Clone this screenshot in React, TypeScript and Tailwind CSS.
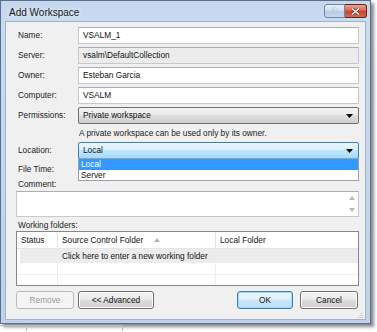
import React from "react";

const F = { fontFamily: '"Liberation Sans", Arial, sans-serif' };

function Arrow({ className = "" }: { className?: string }) {
  return (
    <svg width="7" height="4" viewBox="0 0 7 4" className={className}>
      <path d="M0 0 L7 0 L3.5 4 Z" fill="#000" />
    </svg>
  );
}

function Row({ label, children }: { label: string; children: React.ReactNode }) {
  return (
    <div className="flex items-center h-[17px] shrink-0">
      <div className="w-[60px] text-[8.3px] text-[#222]">{label}</div>
      <div className="flex-1 h-full">{children}</div>
    </div>
  );
}

function TextBox({ value, gray }: { value: string; gray?: boolean }) {
  return (
    <div
      className={`h-full flex items-center px-[4px] border border-[#c5c8d0] border-t-[#abadb3] text-[8.3px] text-[#111] ${
        gray ? "bg-[#ececec]" : "bg-white"
      }`}
    >
      {value}
    </div>
  );
}

function Btn({
  children,
  w,
  variant = "normal",
}: {
  children: React.ReactNode;
  w: string;
  variant?: "normal" | "default" | "disabled";
}) {
  const cls =
    variant === "disabled"
      ? "border-[#b9bcbf] bg-[#f4f4f4] text-[#9a9a9a]"
      : variant === "default"
      ? "border-[#3c7fb1] bg-[linear-gradient(#eaf6fd,#e2f2fb_45%,#c8e6f7_50%,#bfe0f3)] text-[#111] shadow-[inset_0_0_0_1px_#a3d9f7]"
      : "border-[#707070] bg-[linear-gradient(#f2f2f2,#ebebeb_45%,#dddddd_50%,#cfcfcf)] text-[#111] shadow-[inset_0_0_0_1px_#fbfbfb]";
  return (
    <div
      className={`${w} h-[18px] rounded-[3px] border flex items-center justify-center text-[8.3px] ${cls}`}
    >
      {children}
    </div>
  );
}

export default function App() {
  return (
    <div className="w-[377px] h-[332px] bg-white overflow-hidden flex flex-col" style={F}>
      <div className="w-[371px] h-[324px] shrink-0 flex flex-col bg-[linear-gradient(#c4d7ee,#c9dbf0_20px,#bdd2eb)] border border-[#5d6f88] shadow-[3px_3px_3px_rgba(0,0,0,0.45)]">
        {/* title bar */}
        <div className="h-[20px] shrink-0 flex items-start justify-between pl-[8px] pr-[3px]">
          <div className="text-[10px] text-[#1a1a1a] mt-[4px] [text-shadow:0_0_6px_#ffffff]">
            Add Workspace
          </div>
          <div className="flex mt-[3px]">
            <div className="w-[21px] h-[14px] rounded-l-[3px] border border-[#6f86a6] bg-[linear-gradient(#e6eef8,#cddcee_50%,#b8cce6_51%,#c6d8ee)] flex items-center justify-center text-[8px] font-bold text-white [text-shadow:0_0_1px_#4a5d7a]">
              ?
            </div>
            <div className="w-[22px] h-[14px] rounded-r-[3px] border border-l-0 border-[#6a2417] bg-[linear-gradient(#e8a493,#d36a52_45%,#c2432b_50%,#d36b4f)] flex items-center justify-center">
              <svg width="9" height="7" viewBox="0 0 9 7">
                <path d="M1 0.5 L8 6.5 M8 0.5 L1 6.5" stroke="#5a1d12" strokeWidth="2.6" />
                <path d="M1 0.5 L8 6.5 M8 0.5 L1 6.5" stroke="#ffffff" strokeWidth="1.5" />
              </svg>
            </div>
          </div>
        </div>
        {/* content */}
        <div className="flex-1 mx-[4px] mb-[3px] bg-[#f0f0f0] border border-[#9fb2c9] flex flex-col pl-[12px] pr-[6px] pt-[5px] relative">
          <div className="flex flex-col gap-[3px]">
            <Row label="Name:">
              <TextBox value="VSALM_1" />
            </Row>
            <Row label="Server:">
              <TextBox value="vsalm\DefaultCollection" gray />
            </Row>
            <Row label="Owner:">
              <TextBox value="Esteban Garcia" />
            </Row>
            <Row label="Computer:">
              <TextBox value="VSALM" />
            </Row>
            <Row label="Permissions:">
              <div className="h-full rounded-[2px] border border-[#707070] bg-[linear-gradient(#f2f2f2,#ebebeb_45%,#dddddd_50%,#cfcfcf)] flex items-center justify-between pl-[4px] pr-[5px] text-[8.3px] text-[#111]">
                <span>Private workspace</span>
                <Arrow />
              </div>
            </Row>
          </div>
          <div className="h-[18px] shrink-0 flex items-center pl-[61px] text-[8.3px] text-[#222]">
            A private workspace can be used only by its owner.
          </div>
          <div className="relative">
            <Row label="Location:">
              <div className="h-full rounded-[2px] border border-[#3c7fb1] bg-[linear-gradient(#eaf6fd,#d9f0fc_45%,#bee6fd_50%,#a7d9f5)] flex items-center justify-between pl-[4px] pr-[5px] text-[8.3px] text-[#111]">
                <span>Local</span>
                <Arrow />
              </div>
            </Row>
            {/* dropdown list overlay */}
            <div className="absolute left-[60px] right-0 top-[16px] h-[23px] bg-white border border-[#97a0aa] z-10 flex flex-col text-[8.3px]">
              <div className="h-[11px] bg-[#3399ff] text-white flex items-center pl-[2px]">Local</div>
              <div className="h-[11px] text-[#111] flex items-center pl-[2px]">Server</div>
            </div>
          </div>
          <div className="h-[17px] mt-[2px] shrink-0 flex items-center text-[8.3px] text-[#222]">
            File Time:
          </div>
          <div className="h-[12px] shrink-0 flex items-center text-[8.3px] text-[#222]">
            Comment:
          </div>
          <div className="ml-[-2px] h-[26px] mt-[1px] shrink-0 bg-white border border-[#c5c8d0] border-t-[#abadb3] flex justify-end pr-[3px]">
            <div className="flex flex-col justify-between py-[4px]">
              <svg width="6" height="4" viewBox="0 0 6 4">
                <path d="M0 4 L6 4 L3 0 Z" fill="#b8b8b8" />
              </svg>
              <svg width="6" height="4" viewBox="0 0 6 4">
                <path d="M0 0 L6 0 L3 4 Z" fill="#b8b8b8" />
              </svg>
            </div>
          </div>
          <div className="h-[11px] mt-[3px] shrink-0 flex items-center text-[8.3px] text-[#222]">
            Working folders:
          </div>
          {/* table */}
          <div className="ml-[-2px] h-[55px] shrink-0 bg-white border border-[#828790] flex flex-col text-[8.3px] text-[#111]">
            <div className="h-[17px] shrink-0 flex border-b border-[#e5e5e5]">
              <div className="w-[41px] flex items-center pl-[4px] border-r border-[#e5e5e5]">Status</div>
              <div className="w-[158px] flex items-center pl-[4px] border-r border-[#e5e5e5]">
                <span>Source Control Folder</span>
                <svg width="6" height="4" viewBox="0 0 6 4" className="ml-[11px]">
                  <path d="M0 4 L6 4 L3 0 Z" fill="#a7b3bf" />
                </svg>
              </div>
              <div className="flex-1 flex items-center pl-[4px]">Local Folder</div>
            </div>
            <div className="h-[14px] shrink-0 flex bg-[#ececec] ml-[3px]">
              <div className="w-[38px]" />
              <div className="flex items-center pl-[4px]">Click here to enter a new working folder</div>
            </div>
            <div className="h-[12px] shrink-0 flex border-b border-[#eeeeee]">
              <div className="w-[41px] border-r border-[#eeeeee]" />
              <div className="w-[158px] border-r border-[#eeeeee]" />
            </div>
            <div className="flex-1 flex">
              <div className="w-[41px] border-r border-[#eeeeee]" />
              <div className="w-[158px] border-r border-[#eeeeee]" />
            </div>
          </div>
          {/* buttons */}
          <div className="ml-[-2px] mr-[1px] mt-[5px] flex items-center shrink-0">
            <Btn w="w-[58px]" variant="disabled">Remove</Btn>
            <div className="ml-[4px]">
              <Btn w="w-[76px]">&lt;&lt; Advanced</Btn>
            </div>
            <div className="flex-1" />
            <Btn w="w-[56px]" variant="default">OK</Btn>
            <div className="ml-[7px]">
              <Btn w="w-[58px]">Cancel</Btn>
            </div>
          </div>
          <div className="flex-1 flex items-end justify-end mr-[-4px] mb-[1px]">
            <svg width="5" height="5" viewBox="0 0 5 5">
              <rect x="3" y="0" width="1" height="1" fill="#b0b0b0" />
              <rect x="1.5" y="2" width="1" height="1" fill="#b0b0b0" />
              <rect x="3.5" y="2" width="1" height="1" fill="#b0b0b0" />
              <rect x="0" y="4" width="1" height="1" fill="#b0b0b0" />
              <rect x="2" y="4" width="1" height="1" fill="#b0b0b0" />
              <rect x="4" y="4" width="1" height="1" fill="#b0b0b0" />
            </svg>
          </div>
        </div>
      </div>
      {/* background strip below the window */}
      <div className="flex-1 flex items-start pt-[1px]">
        <div className="w-[123px] h-[6px] border-t border-r border-[#b8b8b8] flex">
          <div className="w-[27px] border-r border-[#b8b8b8]" />
        </div>
      </div>
    </div>
  );
}
